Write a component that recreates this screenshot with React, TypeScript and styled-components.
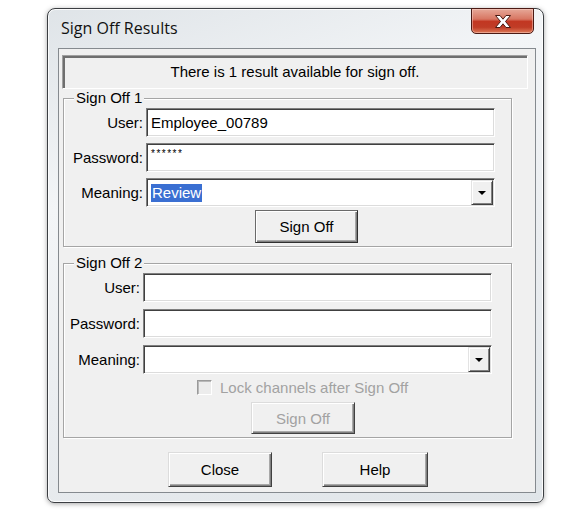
import React from "react";
import styled, { createGlobalStyle } from "styled-components";

const Global = createGlobalStyle`
  html, body { margin: 0; padding: 0; background: #ffffff; }
  body {
    font-family: "Liberation Sans Narrow", "Arial Narrow", "Liberation Sans", Arial, sans-serif;
    color: #000;
  }
`;

const Page = styled.div`
  width: 566px;
  height: 513px;
  box-sizing: border-box;
  padding: 8px 0 0 47px;
`;

const Window = styled.div`
  width: 497px;
  height: 495px;
  box-sizing: border-box;
  border: 1px solid #3b3e42;
  border-radius: 8px 8px 7px 7px;
  background: linear-gradient(160deg, #dfe4e8 0%, #f3f5f7 30%, #eaedf0 60%, #e0e5e9 100%);
  box-shadow: inset 0 0 0 1px rgba(255, 255, 255, 0.85), 0 1px 5px rgba(0, 0, 0, 0.35);
  display: flex;
  flex-direction: column;
`;

const TitleBar = styled.div`
  height: 39px;
  flex: none;
  display: flex;
  align-items: flex-start;
  justify-content: space-between;
`;

const Title = styled.div`
  font-family: "Open Sans", "Noto Sans", sans-serif;
  font-size: 16px;
  line-height: 20px;
  color: #111;
  margin: 9px 0 0 13px;
`;

const CloseButton = styled.div`
  width: 63px;
  height: 26px;
  box-sizing: border-box;
  margin: -1px 9px 0 0;
  border: 1px solid #4b1a14;
  border-radius: 0 0 5px 5px;
  background: linear-gradient(180deg, #e6a898 0%, #d87662 42%, #c23722 52%, #c03c26 76%, #de7a58 100%);
  box-shadow: inset 0 0 0 1px rgba(255, 220, 210, 0.45);
  display: flex;
  align-items: center;
  justify-content: center;
`;

const Client = styled.div`
  flex: 1;
  margin: 0 7px 9px 10px;
  border: 1px solid #858a8f;
  background: #f0f0f0;
  display: flex;
  flex-direction: column;
`;

const StatusPanel = styled.div`
  height: 34px;
  box-sizing: border-box;
  margin: 6px 7px 0 3px;
  border: 1px solid;
  border-color: #a0a0a0 #ffffff #ffffff #a0a0a0;
  box-shadow: inset 2px 2px 0 #6f6f6f;
  display: flex;
  align-items: center;
  justify-content: center;
  font-size: 15px;
  padding-bottom: 2px;
`;

const Group = styled.fieldset<{ $top: number; $right: number }>`
  margin: ${(p) => p.$top}px 23px 0 4px;
  padding: 1px ${(p) => p.$right}px 3px 0;
  border: 1px solid #a5a5a5;
  box-shadow: inset 1px 1px 0 #ffffff, 1px 1px 0 #ffffff;
  min-width: 0;
`;

const Legend = styled.legend`
  margin-left: 10px;
  padding: 0 2px;
  font-size: 15px;
  line-height: 18px;
  background: #f0f0f0;
`;

const FieldGrid = styled.div<{ $label: number; $gap: number }>`
  display: grid;
  grid-template-columns: ${(p) => p.$label}px 349px;
  column-gap: 3px;
  row-gap: ${(p) => p.$gap}px;
  align-items: center;
`;

const Label = styled.label`
  text-align: right;
  font-size: 15px;
  line-height: 18px;
`;

const Sunken = styled.div`
  height: 29px;
  box-sizing: border-box;
  background: #ffffff;
  border: 1px solid;
  border-color: #7f7f7f #ffffff #ffffff #7f7f7f;
  box-shadow: inset 1px 1px 0 #404040, inset -1px -1px 0 #dcdcdc;
  display: flex;
  align-items: center;
  padding: 0 0 0 4px;
  font-size: 15px;
`;

const PasswordDots = styled.span`
  align-self: flex-start;
  font-size: 10px;
  line-height: 10px;
  padding-top: 5px;
  letter-spacing: 1.5px;
`;

const Selected = styled.span`
  background: #3a6fd2;
  color: #ffffff;
  line-height: 18px;
  padding: 0 1px 0 1px;
`;

const DropButton = styled.div`
  margin: 1px 1px 1px auto;
  width: 22px;
  align-self: stretch;
  box-sizing: border-box;
  background: #f0f0f0;
  border: 1px solid;
  border-color: #e3e3e3 #404040 #404040 #e3e3e3;
  box-shadow: inset 1px 1px 0 #ffffff, inset -1px -1px 0 #808080;
  display: flex;
  align-items: center;
  justify-content: center;
`;

const Arrow = styled.span`
  width: 0;
  height: 0;
  border-left: 4px solid transparent;
  border-right: 4px solid transparent;
  border-top: 4px solid #000;
  margin-top: 1px;
`;

const Row = styled.div<{ $indent: number; $top: number; $gap?: number }>`
  display: flex;
  align-items: center;
  gap: ${(p) => p.$gap ?? 0}px;
  padding-left: ${(p) => p.$indent}px;
  margin-top: ${(p) => p.$top}px;
`;

const Button = styled.div<{ $w: number; $h: number; $disabled?: boolean; $default?: boolean }>`
  width: ${(p) => p.$w}px;
  height: ${(p) => p.$h}px;
  box-sizing: border-box;
  background: #f0f0f0;
  border: 1px solid;
  border-color: ${(p) => (p.$default ? "#6a6a6a #303030 #303030 #6a6a6a" : "#dcdcdc #404040 #404040 #dcdcdc")};
  box-shadow: inset 1px 1px 0 #ffffff, inset -1px -1px 0 #808080, inset -2px -2px 0 #a8a8a8;
  display: flex;
  align-items: center;
  justify-content: center;
  font-size: 15px;
  color: ${(p) => (p.$disabled ? "#a2a2a2" : "#000")};
`;

const CheckBox = styled.div`
  width: 15px;
  height: 15px;
  box-sizing: border-box;
  background: #ececec;
  border: 1px solid;
  border-color: #9a9a9a #ffffff #ffffff #9a9a9a;
  box-shadow: inset 1px 1px 0 #b8b8b8;
`;

const CheckText = styled.span`
  font-size: 15px;
  line-height: 15px;
  color: #a2a2a2;
`;

const Footer = styled.div`
  display: flex;
  gap: 50px;
  padding-left: 109px;
  margin-top: 14px;
`;

const CloseGlyph = () => (
  <svg width="18" height="15" viewBox="0 0 18 15">
    <path
      d="M1.5 1.5 H6 L9 5.2 L12 1.5 H16.5 L11.5 7.5 L16.5 13.5 H12 L9 9.8 L6 13.5 H1.5 L6.5 7.5 Z"
      fill="#ffffff"
      stroke="#4a1a12"
      strokeWidth="1"
      strokeLinejoin="round"
    />
  </svg>
);

export default function App() {
  return (
    <>
      <Global />
      <Page>
        <Window>
          <TitleBar>
            <Title>Sign Off Results</Title>
            <CloseButton>
              <CloseGlyph />
            </CloseButton>
          </TitleBar>
          <Client>
            <StatusPanel>There is 1 result available for sign off.</StatusPanel>

            <Group $top={0} $right={15}>
              <Legend>Sign Off 1</Legend>
              <FieldGrid $label={79} $gap={6}>
                <Label>User:</Label>
                <Sunken>Employee_00789</Sunken>
                <Label>Password:</Label>
                <Sunken>
                  <PasswordDots>******</PasswordDots>
                </Sunken>
                <Label>Meaning:</Label>
                <Sunken>
                  <Selected>Review</Selected>
                  <DropButton>
                    <Arrow />
                  </DropButton>
                </Sunken>
              </FieldGrid>
              <Row $indent={191} $top={3}>
                <Button $w={103} $h={33} $default>
                  Sign Off
                </Button>
              </Row>
            </Group>

            <Group $top={7} $right={18}>
              <Legend>Sign Off 2</Legend>
              <FieldGrid $label={76} $gap={7}>
                <Label>User:</Label>
                <Sunken />
                <Label>Password:</Label>
                <Sunken />
                <Label>Meaning:</Label>
                <Sunken>
                  <DropButton>
                    <Arrow />
                  </DropButton>
                </Sunken>
              </FieldGrid>
              <Row $indent={133} $top={6} $gap={8}>
                <CheckBox />
                <CheckText>Lock channels after Sign Off</CheckText>
              </Row>
              <Row $indent={187} $top={7}>
                <Button $w={104} $h={32} $disabled>
                  Sign Off
                </Button>
              </Row>
            </Group>

            <Footer>
              <Button $w={104} $h={35}>Close</Button>
              <Button $w={106} $h={35}>Help</Button>
            </Footer>
          </Client>
        </Window>
      </Page>
    </>
  );
}
